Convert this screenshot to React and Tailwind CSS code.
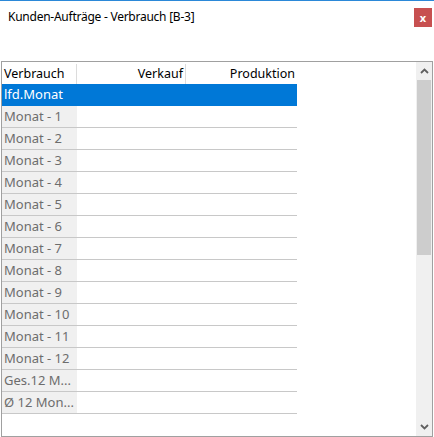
import React from 'react';

const rows = [
    'lfd.Monat',
    'Monat - 1',
    'Monat - 2',
    'Monat - 3',
    'Monat - 4',
    'Monat - 5',
    'Monat - 6',
    'Monat - 7',
    'Monat - 8',
    'Monat - 9',
    'Monat - 10',
    'Monat - 11',
    'Monat - 12',
    'Ges.12 M...',
    'Ø 12 Mon...',
];

const Chevron = ({ down = false }) => (
    <svg width="9" height="6" viewBox="0 0 9 6" className={down ? 'rotate-180' : ''}>
        <path d="M1 5 L4.5 1.5 L8 5" fill="none" stroke="#606060" strokeWidth="1.8" />
    </svg>
);

const App = () => {
    return (
        <div
            className="w-[434px] h-[437px] bg-white border-t border-[#2b88d8] flex flex-col"
            style={{ fontFamily: '"Noto Sans", "Open Sans", sans-serif' }}
        >
            {/* title bar */}
            <div className="h-[60px] flex items-start justify-between pl-[8px] pr-[2px]">
                <span className="mt-[8px] text-[12px] leading-[16px] tracking-[-0.25px] text-black">
                    Kunden-Aufträge - Verbrauch [B-3]
                </span>
                <button
                    type="button"
                    className="mt-[7px] w-[18px] h-[19px] bg-[#c75050] text-white text-[11px] font-bold leading-[17px] flex items-center justify-center"
                >
                    x
                </button>
            </div>

            {/* grid */}
            <div className="ml-[1px] w-[432px] h-[376px] border border-[#a0a0a0] flex">
                <div className="flex-1 flex flex-col">
                    <div className="h-[22px] pt-[2px] flex items-center text-[12.5px] text-black">
                        <div className="w-[75px] pl-[2px] h-full flex items-center border-r border-[#dcdcdc]">Verbrauch</div>
                        <div className="w-[109px] pr-[2px] h-full flex items-center justify-end border-r border-[#dcdcdc]">Verkauf</div>
                        <div className="w-[111px] pr-[2px] h-full flex items-center justify-end">Produktion</div>
                    </div>
                    {rows.map((r, i) => (
                        <div
                            key={i}
                            className={`w-[295px] h-[22px] flex border-b ${i === 0 ? 'bg-[#0078d7] border-[#0078d7]' : 'border-[#c8c8c8]'}`}
                        >
                            <div
                                className={`w-[75px] pl-[2px] pt-[1px] flex items-center text-[13px] whitespace-nowrap overflow-hidden ${i === 0 ? 'text-white' : 'bg-[#f0f0f0] text-[#6d6d6d]'}`}
                            >
                                {r}
                            </div>
                            <div className="flex-1" />
                        </div>
                    ))}
                </div>

                {/* scrollbar */}
                <div className="w-[16px] bg-[#f0f0f0] flex flex-col">
                    <div className="h-[18px] flex items-center justify-center">
                        <Chevron />
                    </div>
                    <div className="h-[175px] mx-[1px] bg-[#cdcdcd]" />
                    <div className="flex-1" />
                    <div className="h-[18px] flex items-center justify-center">
                        <Chevron down />
                    </div>
                </div>
            </div>
        </div>
    );
};

export default App;
